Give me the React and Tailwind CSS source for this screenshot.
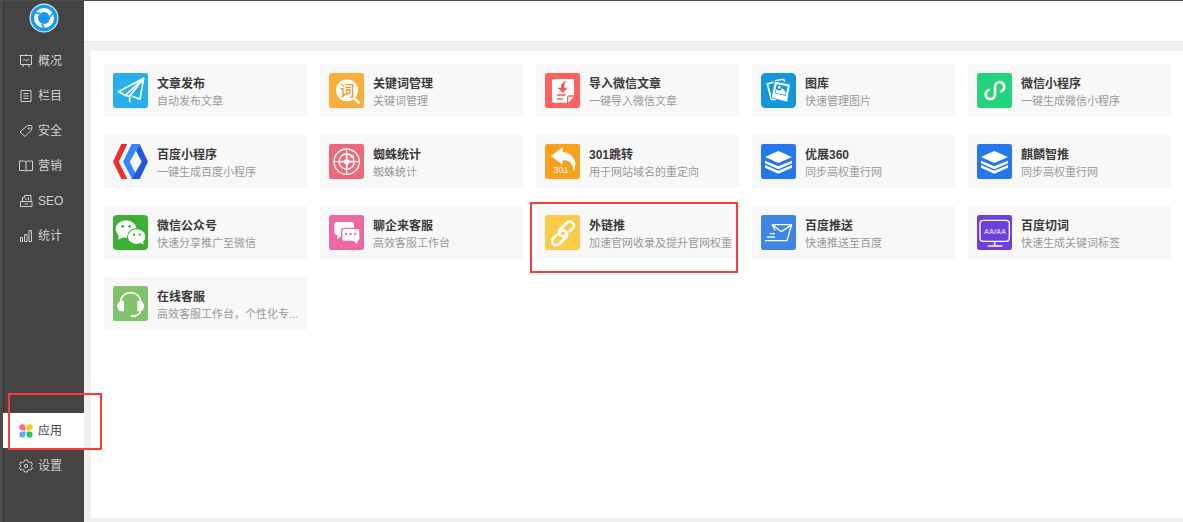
import React from "react";

const tiles = {
  plane: (
    <>
      <rect width="105" height="105" rx="7" fill="#27b0ea" />
      <path d="M92 16L16 56L37 67ZM92 16L50 70V88M92 16L81 79L58 70M50 70L37 67" fill="none" stroke="#fff" strokeWidth="5" strokeLinejoin="round" />
    </>
  ),
  keyword: (
    <>
      <rect width="105" height="105" rx="7" fill="#f9ae3c" />
      <circle cx="54" cy="52" r="33" fill="#fff" />
      <path d="M76 76L92 92" stroke="#fff" strokeWidth="7" />
      <text x="54" y="68" textAnchor="middle" fontSize="44" fontWeight="500" fill="#ee9a2c">词</text>
    </>
  ),
  article: (
    <>
      <rect width="105" height="105" rx="7" fill="#ff6161" />
      <path d="M25 18H82Q87 18 87 23V67H72Q66 67 66 73V89H25Q21 89 21 85V22Q21 18 25 18Z" fill="#fff" />
      <path d="M70 71H87L70 89Z" fill="#fff" />
      <path d="M66 24C50 28 48 36 48 44H37L53 59L69 44H58C57 36 58 30 66 24Z" fill="#f35a5a" />
      <path d="M36 66H62M36 78H53" stroke="#f35a5a" strokeWidth="5" />
    </>
  ),
  gallery: (
    <>
      <rect width="105" height="105" rx="13" fill="#1596dc" />
      <path d="M38 27L19 33L31 79L44 80" fill="none" stroke="#fff" strokeWidth="5" />
      <path d="M42 23L68 19L71 26" fill="none" stroke="#fff" strokeWidth="4" />
      <path d="M41 25L88 34L79 87L31 75Z" fill="#fff" stroke="#1596dc" strokeWidth="2" />
      <path d="M47 34L80 40L74 69L41 61Z" fill="#1596dc" />
      <path d="M43 59L47 49L55 54L65 46L75 59L72 66Z" fill="#fff" />
      <circle cx="55" cy="43" r="4" fill="#fff" />
    </>
  ),
  wxMini: (
    <>
      <rect width="105" height="105" rx="7" fill="#23d37b" />
      <path d="M36 51A14 14 0 1 0 54 64V42A14 14 0 1 1 72 55" fill="none" stroke="#fff" strokeWidth="8" strokeLinecap="round" />
    </>
  ),
  bdMini: (
    <>
      <path d="M25 0H43L17 53L43 105H25L0 53Z" fill="#f02b2b" />
      <path d="M56 0H80L50 53L68 88L57 105L30 53Z" fill="#3288fb" />
      <path d="M80 0L105 53L80 105H56L86 53L69 20Z" fill="#2459dc" />
    </>
  ),
  target: (
    <>
      <rect width="105" height="105" rx="7" fill="#ee687b" />
      <g fill="none" stroke="#fff">
        <circle cx="53" cy="53" r="38" strokeWidth="4" />
        <circle cx="53" cy="53" r="23" strokeWidth="4" />
        <path d="M53 14V92M14 53H92" strokeWidth="3" />
        <path d="M53 32V74M32 53H74" strokeWidth="5" />
      </g>
      <circle cx="53" cy="53" r="8" fill="#fff" />
      <circle cx="69" cy="37" r="5" fill="#fff" />
    </>
  ),
  redirect: (
    <>
      <rect width="105" height="105" rx="7" fill="#f9a01f" />
      <path d="M18 36L53 10V24C82 26 101 52 86 83C84 59 73 48 53 48V62Z" fill="#fff" />
      <text x="48" y="87" textAnchor="middle" fontSize="27" fill="#fff">301</text>
    </>
  ),
  layers: (
    <>
      <rect width="105" height="105" rx="7" fill="#2477ec" />
      <path d="M12 39L52 21L93 39L52 57Z" fill="#fff" />
      <path d="M12 50L52 67L93 50V58L52 76L12 58Z" fill="#fff" />
      <path d="M12 63L52 80L93 63V71L52 89L12 71Z" fill="#fff" />
    </>
  ),
  wechat: (
    <>
      <rect width="105" height="105" rx="12" fill="#3bb035" />
      <ellipse cx="39" cy="42" rx="31" ry="26" fill="#fff" />
      <path d="M17 58L16 74L32 66Z" fill="#fff" />
      <ellipse cx="71" cy="65" rx="29" ry="25" fill="#3bb035" />
      <ellipse cx="71" cy="65" rx="26" ry="22" fill="#fff" />
      <path d="M80 82L92 89L89 76Z" fill="#fff" />
      <g fill="#3bb035">
        <circle cx="29" cy="34" r="4" />
        <circle cx="50" cy="34" r="4" />
        <circle cx="63" cy="59" r="3.5" />
        <circle cx="80" cy="59" r="3.5" />
      </g>
    </>
  ),
  chat: (
    <>
      <rect width="105" height="105" rx="7" fill="#ec69a2" />
      <path d="M24 21H67Q75 21 75 29V52Q75 60 67 60H40L25 73V60H24Q16 60 16 52V29Q16 21 24 21Z" fill="#fff" />
      <path d="M45 40H86Q93 40 93 47V72Q93 79 87 79V90L71 79H45Q38 79 38 72V47Q38 40 45 40Z" fill="#fff" stroke="#ec69a2" strokeWidth="4" />
      <g fill="#ec69a2">
        <circle cx="51" cy="57" r="3.5" />
        <circle cx="65" cy="57" r="3.5" />
        <circle cx="79" cy="57" r="3.5" />
      </g>
    </>
  ),
  link: (
    <>
      <rect width="105" height="105" rx="7" fill="#fbcc49" />
      <g transform="translate(54 55) rotate(-43)" fill="none" stroke="#fff" strokeWidth="8" strokeLinecap="round">
        <path d="M4 9H2A12 12 0 0 1 2 -15H31A12 12 0 0 1 31 9H19" />
        <path d="M-4 -9H-2A12 12 0 0 1 -2 15H-31A12 12 0 0 1 -31 -9H-19" />
      </g>
    </>
  ),
  send: (
    <>
      <rect width="105" height="105" rx="7" fill="#3f85e3" />
      <path d="M42 46L34 29H92L78 77H12M36 31L61 50L90 31M18 66H42M26 56H42" fill="none" stroke="#fff" strokeWidth="4" strokeLinejoin="round" />
    </>
  ),
  words: (
    <>
      <rect width="105" height="105" rx="7" fill="#6c40dd" />
      <rect x="9" y="16" width="88" height="63" rx="10" fill="none" stroke="#fff" strokeWidth="4" />
      <path d="M53 80V92M32 93H76" stroke="#fff" strokeWidth="5" />
      <text x="54" y="56" textAnchor="middle" fontSize="21" fontWeight="700" fill="#d9cdf8">AA/AA</text>
    </>
  ),
  headset: (
    <>
      <rect width="105" height="105" rx="7" fill="#80c36c" />
      <path d="M23 50C23 10 83 10 83 50" fill="none" stroke="#fff" strokeWidth="5" />
      <path d="M33 45V76H25Q13 74 13 61Q13 47 25 45ZM73 45V76H81Q93 74 93 61Q93 47 81 45Z" fill="#fff" />
      <path d="M83 74Q81 88 62 90" fill="none" stroke="#fff" strokeWidth="4" />
      <ellipse cx="61" cy="90" rx="8" ry="4" fill="#fff" />
    </>
  ),
};

const apps = [
  ["plane", "文章发布", "自动发布文章"],
  ["keyword", "关键词管理", "关键词管理"],
  ["article", "导入微信文章", "一键导入微信文章"],
  ["gallery", "图库", "快速管理图片"],
  ["wxMini", "微信小程序", "一键生成微信小程序"],
  ["bdMini", "百度小程序", "一键生成百度小程序"],
  ["target", "蜘蛛统计", "蜘蛛统计"],
  ["redirect", "301跳转", "用于网站域名的重定向"],
  ["layers", "优展360", "同步高权重行网"],
  ["layers", "麒麟智推", "同步高权重行网"],
  ["wechat", "微信公众号", "快速分享推广至微信"],
  ["chat", "聊企来客服", "高效客服工作台"],
  ["link", "外链推", "加速官网收录及提升官网权重"],
  ["send", "百度推送", "快速推送至百度"],
  ["words", "百度切词", "快速生成关键词标签"],
  ["headset", "在线客服", "高效客服工作台，个性化专..."],
];

const navIcons = {
  overview: <path d="M.5 1.5H13.5M1.5 1.5V10.5H12.5V1.5M7 0V1.5M5 10.5L3.5 13M9 10.5L10.5 13M4 6.5L5.5 5L7.5 7L10 5" />,
  column: <path d="M2 1.5H12V12.5H2ZM4.5 4.5H9.5M4.5 7H9.5M4.5 9.5H9.5" />,
  tag: (
    <>
      <path d="M8.5 1.5H12Q13 1.5 13 2.5L12.5 6L6 12.5L1 8Z" />
      <circle cx="10" cy="4.5" r=".8" />
    </>
  ),
  book: <path d="M7 3Q6 2 4.5 2H.5V11.5H5Q6.5 11.5 7 12.5Q7.5 11.5 9 11.5H13.5V2H9.5Q8 2 7 3V12" />,
  seo: <path d="M3.5 7V3.5H5.5V1.5H12V7M1.5 7.5H13V12.5H1.500ZM5.5 10H9M7 4V6M9.500 3.5V6" />,
  stats: <path d="M1.5 8.5H3.5V12.5H1.5ZM5.5 5.5H8V12.5H5.5ZM10 1.5H12.5V12.5H10Z" />,
  gear: (
    <>
      <path d="M5.5 1H8.5L9 2.8L10.5 3.6L12.2 3L13.5 5.5L12.3 6.5V7.7L13.5 8.7L12.2 11L10.5 10.5L9 11.3L8.5 13H5.5L5 11.3L3.5 10.5L1.8 11L.5 8.7L1.7 7.7V6.5L.5 5.5L1.8 3L3.5 3.6L5 2.8Z" />
      <circle cx="7" cy="7" r="1.7" />
    </>
  ),
  apps: (
    <g stroke="none">
      <path d="M3.3 .3A3 3 0 0 1 6.4 3.3V6.4H3.3A3 3 0 0 1 3.3 .3Z" fill="#ff6b78" />
      <path d="M10.7 .3A3 3 0 0 1 10.7 6.4H7.6V3.3A3 3 0 0 1 10.7 .3Z" fill="#fccb12" />
      <path d="M3.3 7.6H6.4V10.7A3 3 0 1 1 3.3 7.6Z" fill="#61a8ff" />
      <path d="M7.6 7.6H10.7A3 3 0 1 1 7.6 10.7Z" fill="#1fce5a" />
    </g>
  ),
};

function NavItem({ icon, label, active, children }) {
  return (
    <a
      href="#"
      aria-current={active ? "page" : undefined}
      className={
        active
          ? "relative flex h-[35px] items-center gap-[5px] bg-white pl-4 text-xs text-[#444]"
          : "relative flex h-[35px] items-center gap-[5px] pl-4 text-xs text-[#d0d0d0]"
      }
    >
      <svg viewBox="0 0 14 14" className="size-[14px] shrink-0" fill="none" stroke="currentColor" strokeWidth="1" aria-hidden="true">
        {navIcons[icon]}
      </svg>
      {label}
      {children}
    </a>
  );
}

function AppCard({ icon, title, desc, marked }) {
  return (
    <a href="#" className="relative flex min-w-0 items-center gap-[9px] bg-[#f8f8f8] py-[9px] pr-[5px] pl-[9px]">
      <svg viewBox="0 0 105 105" className="size-[35px] shrink-0" aria-hidden="true">
        {tiles[icon]}
      </svg>
      <span className="flex h-[35px] min-w-0 flex-col pt-[3px] whitespace-nowrap">
        <span className="text-xs leading-[17px] font-bold text-[#3a3a3a]">{title}</span>
        <span className="text-[11px] leading-[17px] text-[#999]">{desc}</span>
      </span>
      {marked && <span className="pointer-events-none absolute -top-1 right-px -bottom-[14px] -left-1.5 border-2 border-[#fc3a3a]" />}
    </a>
  );
}

export default function App() {
  return (
    <div className="flex min-h-screen flex-col bg-[#f0f0f0] font-['Liberation_Sans','Noto_Sans_CJK_SC',sans-serif]">
      <div className="h-px bg-[#4c4c4c]" />
      <div className="flex flex-1">
        <nav className="flex w-[84px] shrink-0 flex-col border-l-3 border-[#4a4a4a] bg-[#444] pb-[39px] shadow-[inset_1px_0_0_#333]">
          <div className="flex h-[42px] items-start justify-center pt-[2px]">
            <svg viewBox="-15 -15 30 30" className="size-[30px]" role="img" aria-label="Logo">
              <circle r="14.5" fill="#dcecf8" />
              <circle r="13.3" fill="#159af3" />
              <circle r="8" fill="none" stroke="#fff" strokeWidth="4" />
              <g fill="none" stroke="#159af3" strokeWidth="1.6">
                <path d="M-4 -5Q-7 -4 -11 -6.500" />
                <path d="M-4 -5Q-7 -4 -11 -6.500" transform="rotate(120)" />
                <path d="M-4 -5Q-7 -4 -11 -6.500" transform="rotate(240)" />
              </g>
            </svg>
          </div>
          <NavItem icon="overview" label="概况" />
          <NavItem icon="column" label="栏目" />
          <NavItem icon="tag" label="安全" />
          <NavItem icon="book" label="营销" />
          <NavItem icon="seo" label="SEO" />
          <NavItem icon="stats" label="统计" />
          <div className="flex-1" />
          <NavItem icon="apps" label="应用" active>
            <span className="pointer-events-none absolute -top-5 -right-[18px] -bottom-0.5 left-[5px] z-10 border-2 border-[#fc3a3a]" />
          </NavItem>
          <NavItem icon="gear" label="设置" />
        </nav>
        <div className="flex min-w-0 flex-1 flex-col">
          <header className="h-[41px] border-b border-[#e8e8e8] bg-white" />
          <main className="mt-[9px] mb-1 ml-[7px] flex-1 bg-white pt-[13px] pr-3 pb-[13px] pl-[13px]">
            <div className="grid grid-cols-5 gap-x-[13px] gap-y-[18px]">
              {apps.map(([icon, title, desc]) => (
                <AppCard key={title} icon={icon} title={title} desc={desc} marked={icon === "link"} />
              ))}
            </div>
          </main>
        </div>
      </div>
    </div>
  );
}
